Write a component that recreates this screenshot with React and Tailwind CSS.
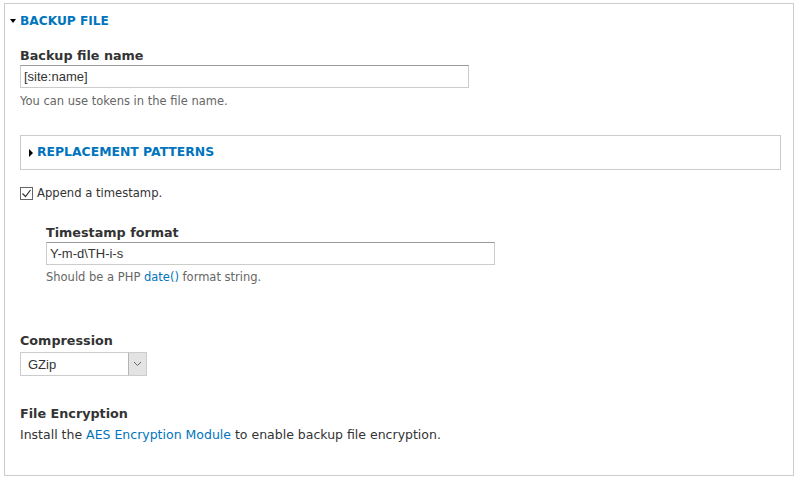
export default function App() {
  const sans = { fontFamily: '"DejaVu Sans", "Lucida Grande", sans-serif' }
  const arial = { fontFamily: '"Liberation Sans", Arial, sans-serif' }
  return (
    <div className="w-[800px] h-[480px] bg-white pt-[3px] pl-[4px] text-[#333]" style={sans}>
      <fieldset className="w-[790px] h-[473px] border border-[#ccc] pl-[15px] pr-[12px] m-0 min-w-0">
        <div className="flex items-center h-[32px] pt-[2px] -ml-[10px]">
          <span className="w-0 h-0 border-l-[3px] border-r-[3px] border-t-[4px] border-l-transparent border-r-transparent border-t-black mr-[4px]" />
          <span className="text-[12.2px] font-bold text-[#0074bd]">BACKUP FILE</span>
        </div>

        <div className="mt-[11px]">
          <div className="text-[12.75px] font-bold leading-[18px] text-[#333]">Backup file name</div>
          <div className="w-[449px] h-[23px] border border-[#ccc] border-t-[#999] flex items-center px-[3px] text-[13px] text-[#333]" style={arial}>[site:name]</div>
          <div className="text-[11.5px] text-[#666] mt-[5px] leading-[16px]">You can use tokens in the file name.</div>
        </div>

        <div className="mt-[26px] h-[35px] w-[761px] border border-[#ccc] flex items-center pl-[8px]">
          <span className="w-0 h-0 border-t-[4px] border-b-[4px] border-l-[4px] border-t-transparent border-b-transparent border-l-black mr-[4px]" />
          <span className="text-[12.4px] font-bold text-[#0074bd]">REPLACEMENT PATTERNS</span>
        </div>

        <div className="mt-[15px] flex items-center">
          <span className="w-[13px] h-[13px] border border-[#666] flex items-center justify-center">
            <svg width="11" height="11" viewBox="0 0 11 11" fill="none">
              <path d="M1.5 5.5 L4.5 8.5 L9.5 2" stroke="#333" strokeWidth="1.2" />
            </svg>
          </span>
          <span className="ml-[4px] text-[11.6px] text-[#333]">Append a timestamp.</span>
        </div>

        <div className="ml-[26px] mt-[22px]">
          <div className="text-[12.75px] font-bold leading-[18px] text-[#333]">Timestamp format</div>
          <div className="w-[449px] h-[23px] border border-[#ccc] border-t-[#999] flex items-center px-[3px] text-[13px] text-[#333]" style={arial}>Y-m-d\TH-i-s</div>
          <div className="text-[11.5px] text-[#666] mt-[4px] leading-[16px]">
            Should be a PHP <span className="text-[#0074bd]">date()</span> format string.
          </div>
        </div>

        <div className="mt-[47px]">
          <div className="text-[12.75px] font-bold leading-[18px] text-[#333]">Compression</div>
          <div className="w-[127px] h-[24px] mt-[2px] border border-[#ccc] flex">
            <div className="flex-1 flex items-center px-[7px] text-[13px] text-[#333]" style={arial}>GZip</div>
            <div className="w-[18px] bg-[#e3e3e3] border-l border-[#b5b5b5] flex items-center justify-center">
              <svg width="9" height="6" viewBox="0 0 9 6" fill="none">
                <path d="M1 1 L4.5 4.5 L8 1" stroke="#666" strokeWidth="1" />
              </svg>
            </div>
          </div>
        </div>

        <div className="mt-[29px]">
          <div className="text-[12.75px] font-bold leading-[18px] text-[#333]">File Encryption</div>
          <div className="text-[12.5px] leading-[18px] text-[#333] mt-[3px]">
            Install the <span className="text-[#0074bd]">AES Encryption Module</span> to enable backup file encryption.
          </div>
        </div>
      </fieldset>
    </div>
  )
}
